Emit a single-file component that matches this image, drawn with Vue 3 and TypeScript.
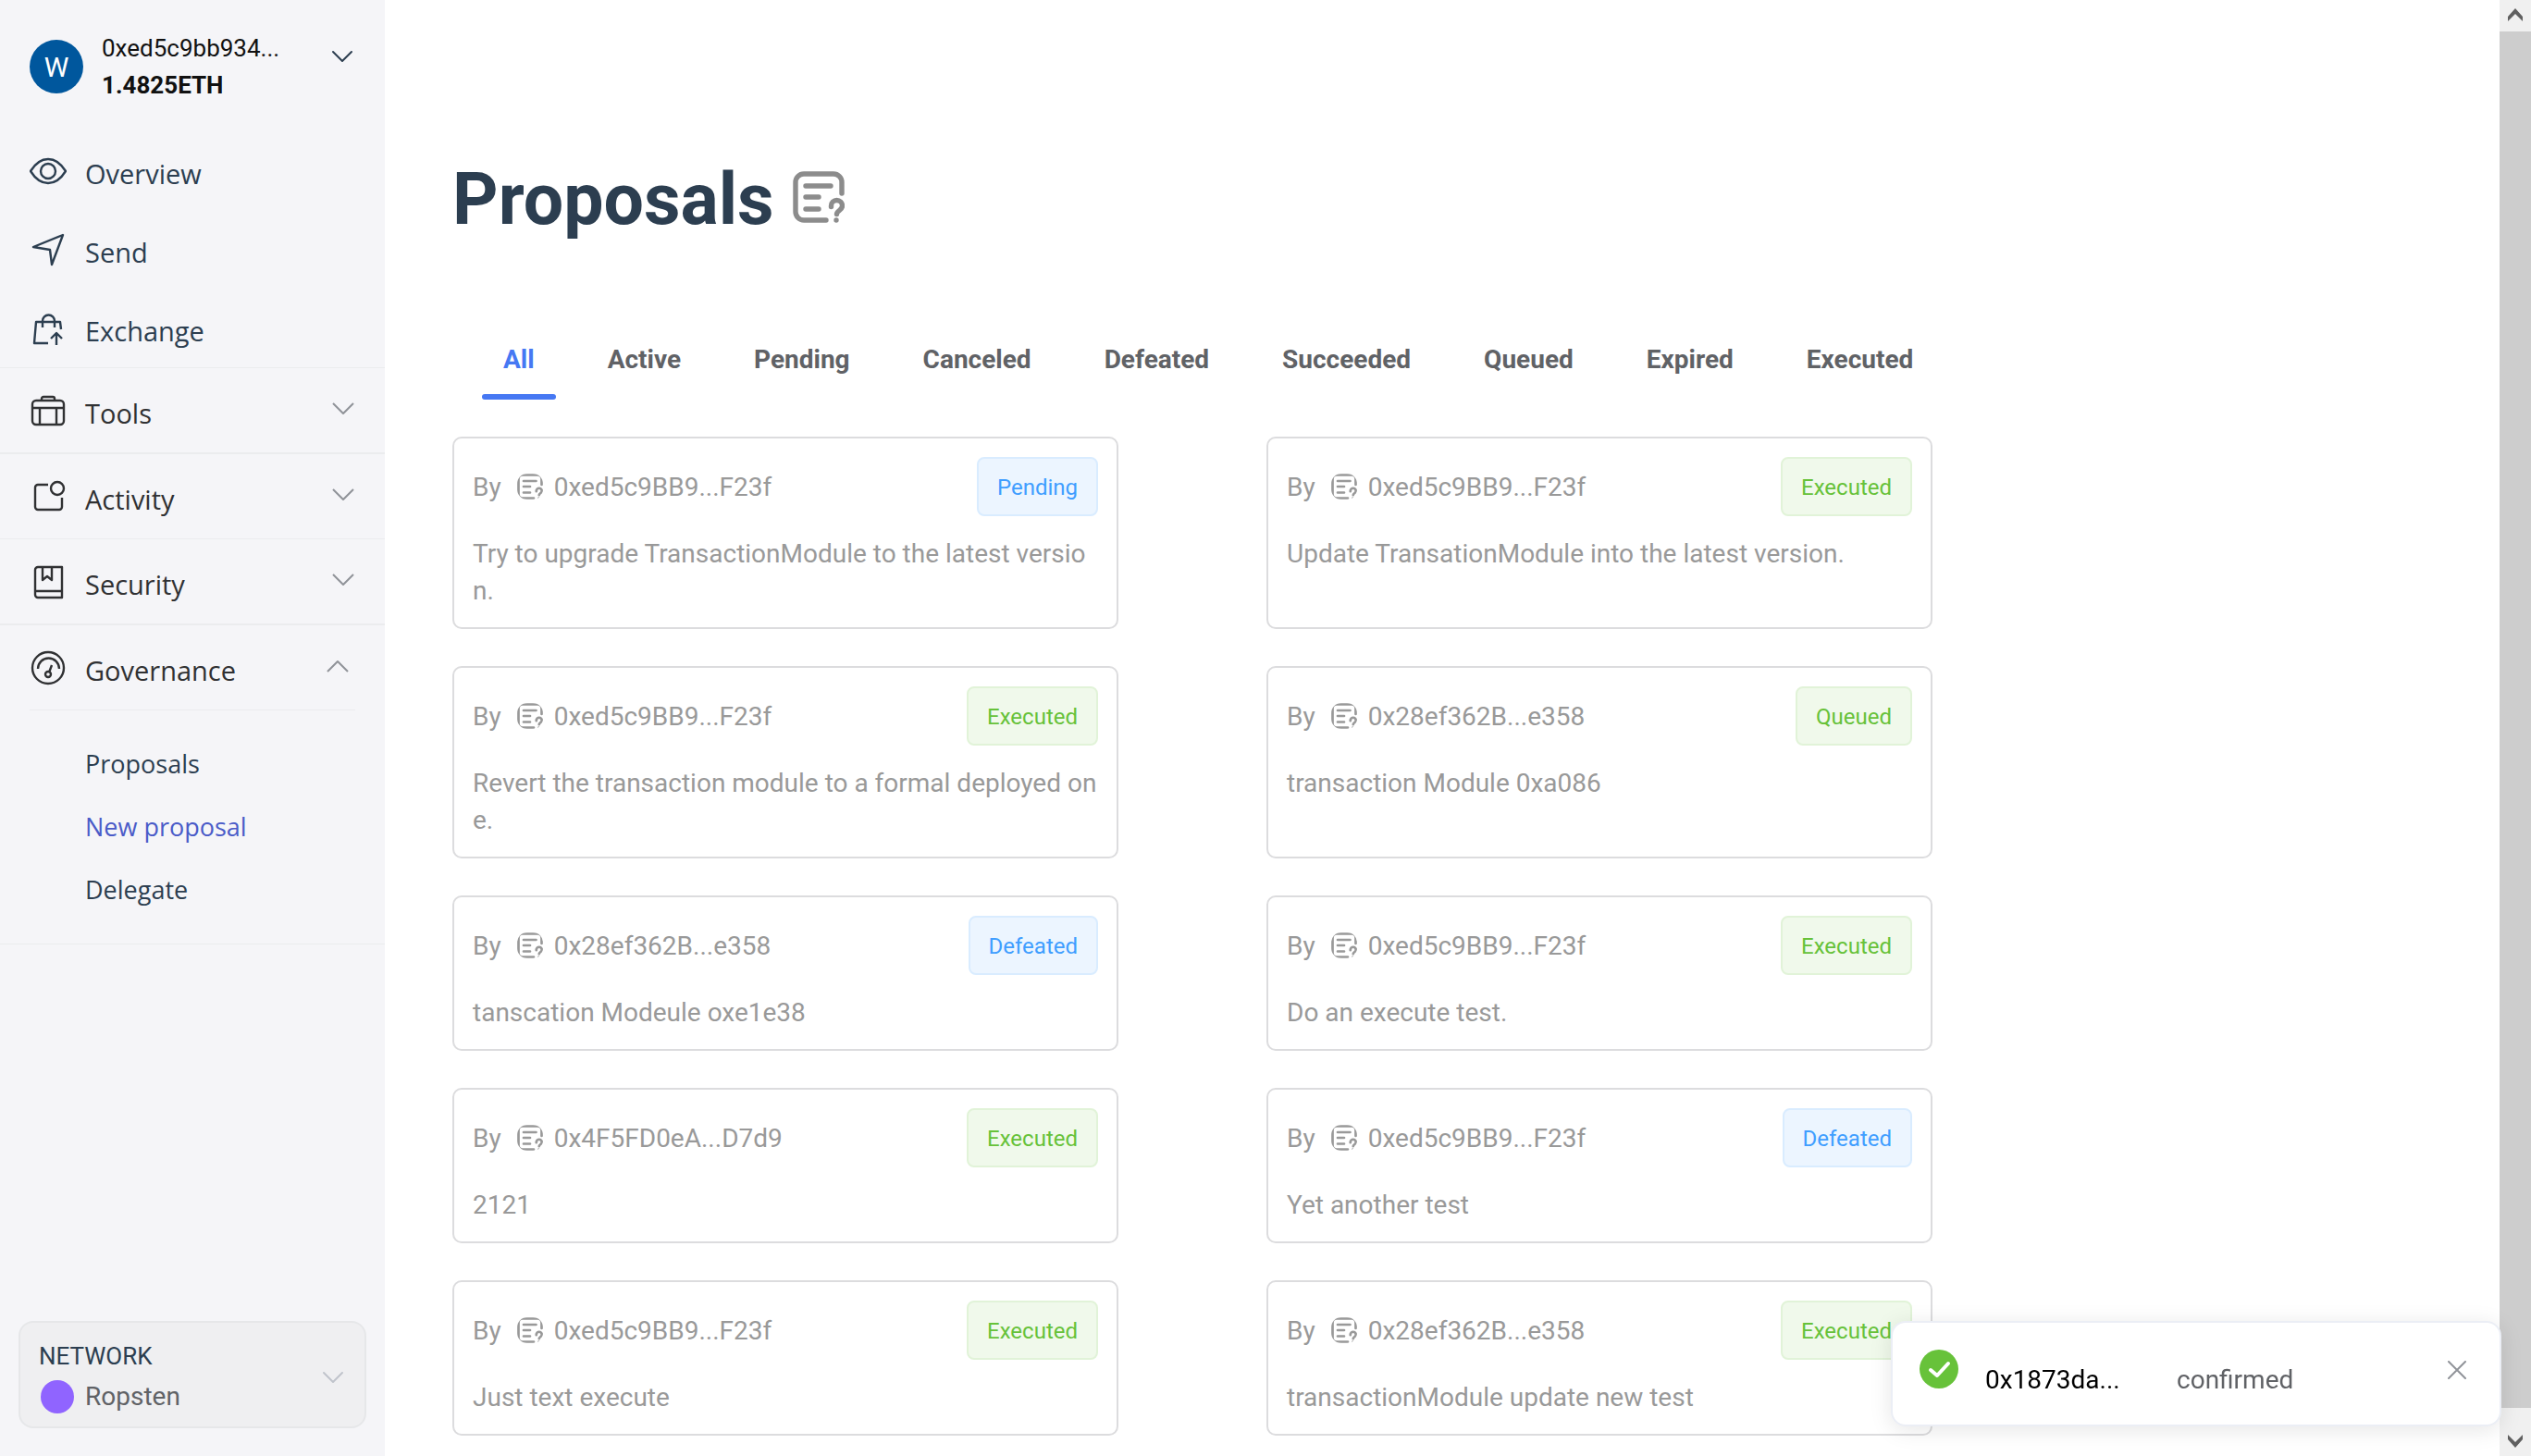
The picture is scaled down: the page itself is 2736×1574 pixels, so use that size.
<script setup lang="ts">
import { ref } from 'vue'

type Status = 'Pending' | 'Executed' | 'Queued' | 'Defeated'

interface Proposal {
  author: string
  status: Status
  text: string
}

const tabs = ['All', 'Active', 'Pending', 'Canceled', 'Defeated', 'Succeeded', 'Queued', 'Expired', 'Executed']
const activeTab = ref('All')
const toastOpen = ref(true)

const links = [
  { name: 'Overview', icon: 'eye' },
  { name: 'Send', icon: 'send' },
  { name: 'Exchange', icon: 'bag' },
]
const groups = [
  { name: 'Tools', icon: 'case' },
  { name: 'Activity', icon: 'activity' },
  { name: 'Security', icon: 'book' },
  { name: 'Governance', icon: 'gauge' },
]
const subLinks = ['Proposals', 'New proposal', 'Delegate']
const currentLink = 'New proposal'

const proposals: Proposal[] = [
  { author: '0xed5c9BB9...F23f', status: 'Pending', text: 'Try to upgrade TransactionModule to the latest version.' },
  { author: '0xed5c9BB9...F23f', status: 'Executed', text: 'Update TransationModule into the latest version.' },
  { author: '0xed5c9BB9...F23f', status: 'Executed', text: 'Revert the transaction module to a formal deployed one.' },
  { author: '0x28ef362B...e358', status: 'Queued', text: 'transaction Module 0xa086' },
  { author: '0x28ef362B...e358', status: 'Defeated', text: 'tanscation Modeule oxe1e38' },
  { author: '0xed5c9BB9...F23f', status: 'Executed', text: 'Do an execute test.' },
  { author: '0x4F5FD0eA...D7d9', status: 'Executed', text: '2121' },
  { author: '0xed5c9BB9...F23f', status: 'Defeated', text: 'Yet another test' },
  { author: '0xed5c9BB9...F23f', status: 'Executed', text: 'Just text execute' },
  { author: '0x28ef362B...e358', status: 'Executed', text: 'transactionModule update new test' },
]

function isBlue(status: Status): boolean {
  return status === 'Pending' || status === 'Defeated'
}
</script>

<template>
  <div class="app">
    <aside class="sidebar">
      <button class="account" type="button">
        <span class="avatar">W</span>
        <span class="account-text">
          <span class="address">0xed5c9bb934...</span>
          <strong class="balance">1.4825ETH</strong>
        </span>
        <svg class="account-arrow" viewBox="0 0 24 16"><path d="M2 2l10 10L22 2" /></svg>
      </button>

      <nav>
        <ul class="links">
          <li v-for="link in links" :key="link.name">
            <a class="row" href="#">
              <svg class="icon" viewBox="0 0 40 40">
                <g v-if="link.icon === 'eye'">
                  <path d="M1 20C6 12 12 7 20 7s14 5 19 13c-5 8-11 13-19 13S6 28 1 20z" />
                  <circle cx="20" cy="20" r="8" />
                </g>
                <path v-else-if="link.icon === 'send'" d="M36 4L4 17l18 3 2 16z" />
                <path v-else d="M20 36H5L7 13h26l1 8M14 19v-7a6 6 0 0 1 13 0v7M29 38V25M23 31l6-6 6 6" />
              </svg>
              <span>{{ link.name }}</span>
            </a>
          </li>
        </ul>

        <ul class="groups">
          <li v-for="group in groups" :key="group.name">
            <button class="row" type="button" :aria-expanded="group.icon === 'gauge'">
              <svg class="icon" viewBox="0 0 40 40">
                <g v-if="group.icon === 'case'">
                  <rect x="3" y="9" width="34" height="26" rx="4" />
                  <path d="M13 9V7a2 2 0 0 1 2-2h10a2 2 0 0 1 2 2v2M3 17h34M11 17v18M29 17v18" />
                </g>
                <g v-else-if="group.icon === 'activity'">
                  <path d="M20 7H9a3 3 0 0 0-3 3v21a3 3 0 0 0 3 3h23a3 3 0 0 0 3-3V21" />
                  <circle cx="30" cy="11" r="7" />
                </g>
                <g v-else-if="group.icon === 'book'">
                  <path d="M9 4h26v33H9a3 3 0 0 1-3-3V7a3 3 0 0 1 3-3zM6 30h29M14 4v14l5-4 5 4V4" />
                </g>
                <g v-else>
                  <circle cx="20" cy="20" r="17" />
                  <path d="M9 21a11 11 0 0 1 23 0M24 17l-3 8" />
                  <circle cx="20" cy="27" r="3" />
                </g>
              </svg>
              <span>{{ group.name }}</span>
              <svg class="arrow" :class="{ open: group.icon === 'gauge' }" viewBox="0 0 24 16"><path d="M1 2l11 11L23 2" /></svg>
            </button>
          </li>
        </ul>

        <ul class="sub-links">
          <li v-for="name in subLinks" :key="name">
            <a href="#" :class="{ current: name === currentLink }">{{ name }}</a>
          </li>
        </ul>
      </nav>

      <button class="network" type="button">
        <span class="network-text">
          <span class="network-label">NETWORK</span>
          <span class="network-name"><i class="dot"></i>Ropsten</span>
        </span>
        <svg class="network-arrow" viewBox="0 0 24 16"><path d="M2 2l10 10L22 2" /></svg>
      </button>
    </aside>

    <main class="main">
      <h1 class="title">
        Proposals
        <svg class="title-icon doc" viewBox="0 0 56 56">
          <path d="M53 24V12a9 9 0 0 0-9-9H12a9 9 0 0 0-9 9v32a9 9 0 0 0 9 9h24M14 16h27M14 28h14M14 41h14" />
          <path d="M41.500 38.500v-1a6 6 0 0 1 12 0c0 5-6 5-6 9" />
          <circle class="point" cx="47" cy="53" r="2.700" />
        </svg>
      </h1>

      <div class="tabs" role="tablist">
        <button
          v-for="tab in tabs"
          :key="tab"
          type="button"
          role="tab"
          class="tab"
          :class="{ active: tab === activeTab }"
          :aria-selected="tab === activeTab"
          @click="activeTab = tab"
        >{{ tab }}</button>
      </div>

      <section class="cards">
        <article v-for="(item, index) in proposals" :key="index" class="card">
          <header class="card-head">
            <span class="by">By</span>
            <svg class="doc small" viewBox="0 0 56 56">
              <path d="M53 24V12a9 9 0 0 0-9-9H12a9 9 0 0 0-9 9v32a9 9 0 0 0 9 9h24M14 16h27M14 28h14M14 41h14" />
              <path d="M41.500 38.500v-1a6 6 0 0 1 12 0c0 5-6 5-6 9" />
              <circle class="point" cx="47" cy="53" r="2.700" />
            </svg>
            <span class="author">{{ item.author }}</span>
            <span class="tag" :class="{ blue: isBlue(item.status) }">{{ item.status }}</span>
          </header>
          <p class="card-text">{{ item.text }}</p>
        </article>
      </section>
    </main>

    <div class="scrollbar" aria-hidden="true">
      <svg class="scroll-arrow" viewBox="0 0 34 34"><path d="M9 18l8-9 8 9v5l-8-8-8 8z" /></svg>
      <div class="thumb"></div>
      <div class="track"></div>
      <svg class="scroll-arrow" viewBox="0 0 34 34"><path d="M9 16l8 9 8-9v-5l-8 8-8-8z" /></svg>
    </div>

    <div v-if="toastOpen" class="toast" role="alert">
      <svg class="toast-icon" viewBox="0 0 42 42">
        <circle cx="21" cy="21" r="21" />
        <path d="M12 22l7 6 12-13" />
      </svg>
      <a class="toast-hash" href="#">0x1873da...</a>
      <span class="toast-state">confirmed</span>
      <button class="toast-close" type="button" aria-label="Close" @click="toastOpen = false">
        <svg viewBox="0 0 20 20"><path d="M1 1l18 18M19 1L1 19" /></svg>
      </button>
    </div>
  </div>
</template>

<style>
body {
  margin: 0;
  background: #fff;
}
</style>

<style scoped>
.app {
  display: flex;
  height: 100vh;
  overflow: hidden;
  font-family: Roboto, "Liberation Sans", sans-serif;
  font-size: 28px;
  line-height: 40px;
  color: #2c3e50;
}

.app * {
  box-sizing: border-box;
}

button {
  margin: 0;
  padding: 0;
  border: 0;
  background: none;
  font: inherit;
  color: inherit;
  text-align: left;
  cursor: pointer;
}

a {
  color: inherit;
  text-decoration: none;
}

ul {
  margin: 0;
  padding: 0;
  list-style: none;
}

svg {
  flex: none;
  fill: none;
  stroke: currentColor;
  stroke-linecap: round;
  stroke-linejoin: round;
}

.sidebar {
  display: flex;
  flex: none;
  flex-direction: column;
  width: 416px;
  background: #f5f5f8;
}

.account {
  display: flex;
  align-items: center;
  padding: 32px 34px 0 32px;
  font-size: 26px;
  color: #111;
}

.avatar {
  width: 58px;
  height: 58px;
  margin-right: 20px;
  border-radius: 50%;
  background: #00579d;
  color: #fff;
  font-size: 30px;
  line-height: 60px;
  text-align: center;
}

.account-text {
  display: flex;
  flex: 1;
  flex-direction: column;
}

.account-arrow {
  width: 24px;
  height: 16px;
  margin-bottom: 20px;
  color: #2c3e50;
  stroke-width: 2;
}

nav {
  font-family: "Open Sans", "Noto Sans", sans-serif;
}

.links {
  padding-top: 30px;
}

.links .row {
  height: 85px;
}

.row {
  display: flex;
  align-items: center;
  width: 100%;
  padding: 0 32px;
  font-size: 29px;
}

.row span {
  flex: 1;
  padding-top: 6px;
}

.icon {
  width: 40px;
  height: 40px;
  margin-right: 20px;
  stroke-width: 2.4;
  stroke-linecap: butt;
}

.groups {
  border-top: 1px solid #ebecee;
  color: #303133;
}

.groups li {
  border-bottom: 1px solid #ebecee;
}

.groups li:nth-child(odd) {
  border-bottom-width: 2px;
}

.groups li:last-child {
  margin: 0 32px;
}

.groups li:last-child .row {
  padding: 0;
}

.groups .row {
  height: 91px;
}

.arrow {
  width: 26px;
  height: 16px;
  margin-bottom: 4px;
  color: #909399;
  stroke-width: 2;
  stroke-linecap: butt;
}

.arrow.open {
  margin-right: 6px;
  transform: rotate(180deg);
}

.sub-links {
  padding: 24px 0;
  border-bottom: 1px solid #ebecee;
  font-size: 27px;
}

.sub-links a {
  display: block;
  padding: 14px 92px;
}

.sub-links .current {
  color: #4a5bc8;
}

.network {
  display: flex;
  align-items: center;
  margin: auto 20px 30px;
  padding: 16px 22px 8px 20px;
  border: 2px solid #e6e7e9;
  border-radius: 16px;
  background: #efeff1;
}

.network-text {
  display: flex;
  flex: 1;
  flex-direction: column;
}

.network-label {
  font-size: 26px;
}

.network-name {
  display: flex;
  align-items: center;
  height: 48px;
  color: #606266;
}

.dot {
  width: 36px;
  height: 36px;
  margin: 0 12px 0 2px;
  border-radius: 50%;
  background: #9064ff;
}

.network-arrow {
  width: 24px;
  height: 16px;
  color: #c0c4cc;
  stroke-width: 2;
}

.main {
  flex: 1;
  min-width: 0;
  padding: 170px 73px 0;
}

.title {
  display: flex;
  align-items: center;
  gap: 20px;
  margin: 0;
  font-size: 77px;
  font-weight: 700;
  line-height: 92px;
}

.doc {
  stroke-width: 5.4;
}

.point {
  fill: currentColor;
  stroke: none;
}

.title-icon {
  width: 56px;
  height: 56px;
  margin-bottom: 6px;
  color: #8c8c8c;
}

.tabs {
  display: flex;
  gap: 79px;
  margin-top: 86px;
  padding-left: 55px;
}

.tab {
  position: relative;
  padding: 21px 0 23px;
  color: #606266;
  font-weight: 700;
}

.tab.active {
  color: #4678f3;
}

.tab.active::after {
  position: absolute;
  bottom: 0;
  left: 50%;
  width: 80px;
  height: 6px;
  margin-left: -40px;
  border-radius: 3px;
  background: #4678f3;
  content: "";
}

.cards {
  display: grid;
  grid-template-columns: 45% 45%;
  gap: 40px 10%;
  max-width: 1600px;
  margin-top: 40px;
  color: #999;
}

.card {
  padding: 20px 20px 19px;
  border: 2px solid #dcdcde;
  border-radius: 10px;
}

.card-head {
  display: flex;
  align-items: center;
}

.by {
  margin-right: 17px;
}

.by,
.author {
  padding-top: 2px;
}

.small {
  width: 28px;
  height: 28px;
  margin-right: 12px;
  overflow: hidden;
  border-radius: 11px;
}

.tag {
  margin-left: auto;
  padding: 2px 20px 0;
  border: 2px solid #e1f3d8;
  border-radius: 8px;
  background: #f0f9eb;
  color: #67c23a;
  font-size: 24px;
  line-height: 58px;
}

.tag.blue {
  border-color: #d9ecff;
  background: #ecf5ff;
  color: #409eff;
}

.card-text {
  margin: 21px 0 0;
  word-break: break-all;
}

.scrollbar {
  display: flex;
  flex: none;
  flex-direction: column;
  width: 34px;
  background: #f0f0f0;
}

.scroll-arrow {
  width: 34px;
  height: 34px;
  fill: #606060;
  stroke: none;
}

.thumb {
  flex: 1;
  background: #cdcdcd;
}

.track {
  height: 18px;
}

.toast {
  position: fixed;
  right: 32px;
  bottom: 32px;
  display: flex;
  align-items: flex-start;
  width: 660px;
  padding: 29px 36px 24px 29px;
  border: 2px solid #ebeef5;
  border-radius: 16px;
  background: #fff;
  box-shadow: 0 4px 24px rgba(0, 0, 0, 0.1);
}

.toast-icon {
  width: 42px;
  height: 42px;
  fill: #67c23a;
  stroke: none;
}

.toast-icon path {
  fill: none;
  stroke: #fff;
  stroke-width: 4;
}

.toast-hash {
  width: 207px;
  margin: 13px 0 4px 29px;
  color: #000;
}

.toast-state {
  flex: 1;
  margin-top: 13px;
  color: #606266;
}

.toast-close {
  display: flex;
  margin-top: 12px;
  color: #909399;
}

.toast-close svg {
  width: 20px;
  height: 20px;
  stroke-width: 2;
}
</style>
